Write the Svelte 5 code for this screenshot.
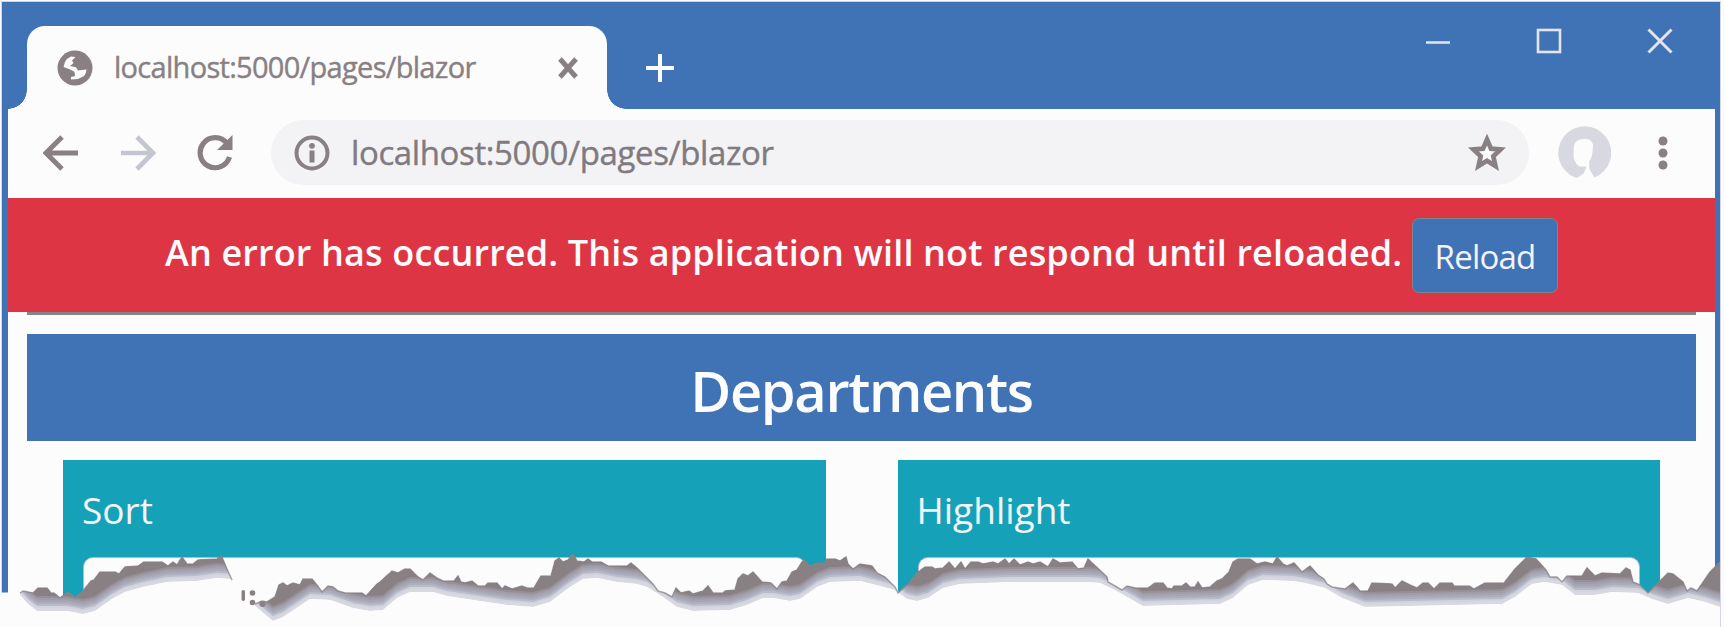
<script>
  const tears = [
    {
      top: '20,593 23,591 33,593 38,588 47,588 51,593 54,593 60,598 68,592 75,598 83,591 91,581 94,580 100,572 115,572 119,574 125,567 138,566 144,562 162,562 168,566 173,562 177,565 182,557 187,564 193,564 198,560 217,559 220,556 222,557 227,569 232,580',
      bottom: '20,595 28,604 37,611 67,611 83,614 95,611 112,599 125,592 143,587 167,582 197,581 217,578 230,579 232,580'
    },
    {
      top: '255,604 262,601 267,602 275,597 279,585 283,583 287,586 293,583 300,585 303,579 312,579 317,585 322,592 328,586 333,587 338,591 345,593 362,593 366,596 377,584 380,582 392,571 398,573 405,569 410,569 418,577 423,580 430,573 437,578 443,581 454,581 458,576 461,582 465,583 472,581 478,586 485,586 488,583 497,583 502,589 505,586 512,589 522,586 527,588 534,588 541,576 551,576 555,561 559,558 563,562 568,560 573,554 577,561 584,562 588,559 592,562 601,562 608,566 627,566 631,563 637,568 653,584 658,591 665,593 672,597 676,588 681,593 689,591 693,594 703,591 708,586 713,593 723,593 725,591 735,590 738,579 743,574 748,576 753,572 762,582 771,583 777,589 782,582 787,581 792,572 797,570 802,562 804,560 810,566 818,563 825,563 827,559 835,559 840,561 846,557 848,564 853,569 860,564 872,566 877,573 885,577 895,587 898,593 910,582 917,573 925,567 932,567 935,569 943,568 949,562 955,569 961,562 965,569 971,562 978,562 983,564 993,562 998,564 1005,559 1009,564 1014,559 1020,565 1028,562 1033,564 1040,562 1048,567 1053,559 1060,563 1072,562 1078,569 1084,568 1088,559 1107,577 1108,582 1122,590 1127,586 1135,588 1148,588 1155,583 1163,583 1167,588 1172,589 1174,586 1182,586 1186,583 1190,587 1195,587 1198,582 1202,588 1210,587 1217,581 1222,579 1229,572 1233,562 1238,559 1250,559 1257,564 1265,562 1273,564 1277,557 1283,564 1287,566 1294,563 1302,572 1310,566 1318,575 1324,579 1327,584 1332,587 1345,589 1353,583 1360,591 1368,591 1372,583 1392,584 1395,588 1402,581 1410,585 1417,588 1423,583 1428,583 1434,589 1440,583 1452,583 1454,586 1469,586 1474,589 1485,583 1504,583 1515,569 1527,557 1536,559 1546,570 1550,577 1557,577 1562,582 1567,576 1582,576 1587,568 1595,576 1602,573 1620,574 1626,568 1630,570 1633,582 1640,585 1648,593 1658,583 1668,573 1673,574 1683,582 1687,591 1691,588 1697,591 1710,572 1720,562',
      bottom: '255,606 273,621 283,617 310,599 330,600 353,608 370,611 383,610 397,598 410,592 433,592 447,596 480,601 507,605 533,607 550,602 570,587 583,579 597,578 617,582 637,584 647,587 660,595 677,607 693,611 730,610 747,605 763,598 773,598 790,601 800,599 817,587 830,582 860,581 880,586 895,590 907,599 917,601 928,598 943,588 960,584 1010,582 1087,582 1100,583 1113,589 1127,597 1143,606 1220,604 1233,598 1248,585 1263,580 1293,581 1305,583 1325,588 1342,598 1365,607 1502,604 1515,597 1532,584 1545,582 1562,585 1575,595 1595,595 1612,592 1638,593 1652,599 1668,604 1688,598 1705,602 1720,607'
    }
  ];

  const shades = [
    [0, '#d8d8e0'], [3, '#d3d3dd'], [5, '#babcca'], [7, '#aaafc0'],
    [9, '#a8a5b2'], [11, '#a29ca6'], [13, '#958f97'], [15, '#888083']
  ];

  const reverse = (points) => points.split(' ').reverse().join(' ');
  const first = (points) => points.split(' ')[0].split(',')[0];
  const last = (points) => points.split(' ').at(-1).split(',')[0];
  const departments = ['Sort', 'Highlight'];
</script>

<div class="page">
  <div class="window">
    <header class="titlebar">
      <div class="tab">
        <svg class="globe" width="36" height="36" viewBox="0 0 36 36">
          <circle cx="18" cy="18" r="17.500" fill="#888083" />
          <path d="M6.500 17L8 12Q10 8 14 6.500L18.500 7L15 10.500L16.500 13L13 16L19 17.300L21 20.500L29.500 19.500Q29.500 23 27 26L21 29L14 29.500L14 27L18 26L17.500 21.700L12.500 19.300Z" fill="#fcfcfc" />
        </svg>
        <span class="tab-title">localhost:5000/pages/blazor</span>
        <svg class="tab-close" width="22" height="26" viewBox="0 0 22 26"><path d="M3 4L19 22M19 4L3 22" stroke="#888083" stroke-width="5" /></svg>
      </div>
      <svg class="plus" width="28" height="28" viewBox="0 0 28 28"><path d="M14 0V28M0 14H28" stroke="#fcfcfc" stroke-width="4" /></svg>
      <div class="controls">
        <svg width="26" height="26" viewBox="0 0 26 26"><path d="M1 14.500H25" stroke="#e4e4ec" stroke-width="2.500" /></svg>
        <svg width="26" height="26" viewBox="0 0 26 26"><rect x="2" y="2" width="22" height="22" fill="none" stroke="#e4e4ec" stroke-width="2.600" /></svg>
        <svg width="26" height="26" viewBox="0 0 26 26"><path d="M1.500 1.500L24.500 24.500M24.500 1.500L1.500 24.500" stroke="#e4e4ec" stroke-width="3" /></svg>
      </div>
    </header>

    <nav class="toolbar">
      <svg class="back" width="36" height="36" viewBox="0 0 36 36"><path d="M35 18H3M19 2L3 18L19 34" fill="none" stroke="#888083" stroke-width="4.900" /></svg>
      <svg class="forward" width="36" height="36" viewBox="0 0 36 36"><path d="M1 18H33M17 2L33 18L17 34" fill="none" stroke="#c3c5d1" stroke-width="4.600" /></svg>
      <svg class="refresh" width="36" height="36" viewBox="0 0 36 36"><path d="M30 8.500A15 15 0 1 0 32.500 22" fill="none" stroke="#888083" stroke-width="5.200" /><path d="M35.500 0V15H20Z" fill="#888083" /></svg>
      <div class="address">
        <svg class="info" width="36" height="36" viewBox="0 0 36 36"><circle cx="18" cy="18" r="15.500" fill="none" stroke="#888083" stroke-width="4" /><circle cx="18" cy="10.800" r="2.900" fill="#888083" /><path d="M18 15.500V27.500" stroke="#888083" stroke-width="5" /></svg>
        <span class="url">localhost:5000/pages/blazor</span>
        <svg class="star" width="38" height="38" viewBox="0 0 38 38"><path d="M19 5.500L23 14.700L32.500 15.500L25.300 22.200L27.500 32L19 26.800L10.500 32L12.700 22.200L5.500 15.500L15 14.700Z" fill="#fcfcfc" stroke="#888083" stroke-width="4.700" /></svg>
      </div>
      <svg class="avatar" width="54" height="54" viewBox="0 0 54 54"><path d="M18 51.500A26.500 26.500 0 1 1 37.500 51.500L32.300 43V35C35 32 36 26 36 18C34 14 32.500 13 27 13C21 13 17 16 16.700 22V32Q19 39 23 40.500H29.500L27 47L21 51.500Z" fill="#d8d8e0" /></svg>
      <svg class="more" width="10" height="36" viewBox="0 0 10 36"><circle cx="5" cy="6" r="4.500" fill="#888083" /><circle cx="5" cy="18" r="4.500" fill="#888083" /><circle cx="5" cy="30" r="4.500" fill="#888083" /></svg>
    </nav>

    <div class="error">
      <span class="message">An error has occurred. This application will not respond until reloaded.</span>
      <button>Reload</button>
    </div>

    <main>
      <div class="rule"></div>
      <h1><span>Departments</span></h1>
      <div class="cards">
        {#each departments as label}
          <section>
            <div class="label">{label}</div>
            <div class="select"></div>
          </section>
        {/each}
      </div>
    </main>
  </div>

  <svg class="torn" width="1725" height="627" viewBox="0 0 1725 627">
    <rect x="0" y="592.500" width="20" height="35" fill="#fcfcfc" />
    <rect x="228" y="580" width="30" height="47" fill="#fcfcfc" />
    {#each tears as tear, i}
      <clipPath id="edge{i}"><polygon points="{tear.top} {reverse(tear.bottom)}" /></clipPath>
      <polygon points="{tear.bottom} {last(tear.bottom)},640 {first(tear.bottom)},640" transform="translate(0 -1)" fill="#fcfcfc" />
      <g clip-path="url(#edge{i})">
        {#each shades as [rise, color]}
          <polygon points="{tear.bottom} {last(tear.bottom)},500 {first(tear.bottom)},500" transform="translate(0 {-rise})" fill={color} />
        {/each}
      </g>
      <polyline points={tear.top} fill="none" stroke="#888083" stroke-width="1.500" opacity=".7" />
    {/each}
    <rect x="241.500" y="590" width="3.500" height="11" rx="1.700" fill="#888083" />
    <circle cx="252.500" cy="593" r="2.800" fill="#888083" />
    <circle cx="252.500" cy="602.500" r="2.800" fill="#888083" />
    <circle cx="262.500" cy="604" r="3" fill="#888083" />
  </svg>
</div>

<style>
  :global(body) { background: #fcfcfc; }
  * { box-sizing: border-box; }
  svg { display: block; flex: none; }
  .page {
    position: relative;
    width: 1725px;
    height: 627px;
    padding: 2px 5px 0 2px;
    overflow: hidden;
    background: #fcfcfc;
    font-family: "Open Sans", "Noto Sans", sans-serif;
  }
  .window {
    height: 625px;
    border: solid #4073b6;
    border-width: 0 5px 0 6px;
    outline: 1px solid #d5d5dd;
    overflow: hidden;
  }
  .titlebar {
    height: 107px;
    display: flex;
    padding: 24px 0 0 19px;
    background: #4073b6;
  }
  .tab {
    position: relative;
    width: 580px;
    height: 83px;
    display: flex;
    align-items: center;
    padding: 0 28px 0 30px;
    background: #fcfcfc;
    border-radius: 18px 18px 0 0;
  }
  .tab::before, .tab::after {
    content: "";
    position: absolute;
    bottom: 0;
    width: 19px;
    height: 19px;
  }
  .tab::before { left: -19px; background: radial-gradient(circle at 0 0, transparent 18.500px, #fcfcfc 19px); }
  .tab::after { right: -19px; background: radial-gradient(circle at 100% 0, transparent 18.500px, #fcfcfc 19px); }
  .tab-title {
    margin-left: 21px;
    margin-top: -1px;
    font-size: 29px;
    line-height: 40px;
    letter-spacing: -0.700px;
    color: #888083;
    -webkit-text-stroke: 0.400px #888083;
    white-space: nowrap;
  }
  .tab-close { margin-left: auto; }
  .plus { margin: 28px 0 0 39px; }
  .controls { display: flex; gap: 85px; margin: 2px 42px 0 auto; }
  .toolbar {
    height: 89px;
    display: flex;
    align-items: center;
    padding: 0 47px 2px 35px;
  }
  .forward { margin-left: 41px; }
  .refresh { margin-left: 41px; }
  .address {
    width: 1258px;
    height: 65px;
    display: flex;
    align-items: center;
    margin-left: 38px;
    padding: 0 23px 0 23px;
    border-radius: 33px;
    background: #f3f3f5;
  }
  .url {
    margin-left: 21px;
    font-size: 33px;
    line-height: 44px;
    letter-spacing: -0.380px;
    color: #817a80;
    -webkit-text-stroke: 0.400px #817a80;
    white-space: nowrap;
  }
  .star { margin-left: auto; }
  .avatar { margin-left: 28px; }
  .more { margin-left: auto; }
  .error {
    height: 114px;
    display: flex;
    align-items: flex-start;
    padding: 20px 0 0 157px;
    background: #de3545;
    color: #fcfcfc;
  }
  .message {
    width: 1247px;
    padding-top: 10px;
    font-size: 36px;
    font-weight: 600;
    line-height: 50px;
    letter-spacing: 0.150px;
    white-space: nowrap;
  }
  button {
    width: 146px;
    height: 75px;
    padding: 3px 0 0;
    border: 1.500px solid #7c8590;
    border-radius: 7px;
    background: #4073b6;
    color: #f4f4f8;
    font: 33px/44px "Open Sans", sans-serif;
    letter-spacing: -0.800px;
  }
  main { padding: 0 19px; }
  .rule { height: 3px; background: #85858a; }
  h1 {
    height: 107px;
    margin: 19px 0 0;
    display: flex;
    justify-content: center;
    background: #4073b6;
    color: #fcfcfc;
    font-size: 56px;
    font-weight: 600;
    line-height: 113px;
    letter-spacing: -1.400px;
  }
  .cards {
    display: flex;
    gap: 72px;
    padding: 19px 36px 0 36px;
  }
  section {
    flex: 1;
    height: 170px;
    padding: 20px 20px 0;
    background: #15a2b9;
  }
  .label {
    height: 77px;
    color: #f4f4f8;
    font-size: 37px;
    line-height: 59px;
    text-indent: -1px;
  }
  .select {
    height: 90px;
    border: 1.500px solid #aebccd;
    border-radius: 10px;
    background: #fcfcfc;
  }
  .torn { position: absolute; inset: 0; }
</style>
